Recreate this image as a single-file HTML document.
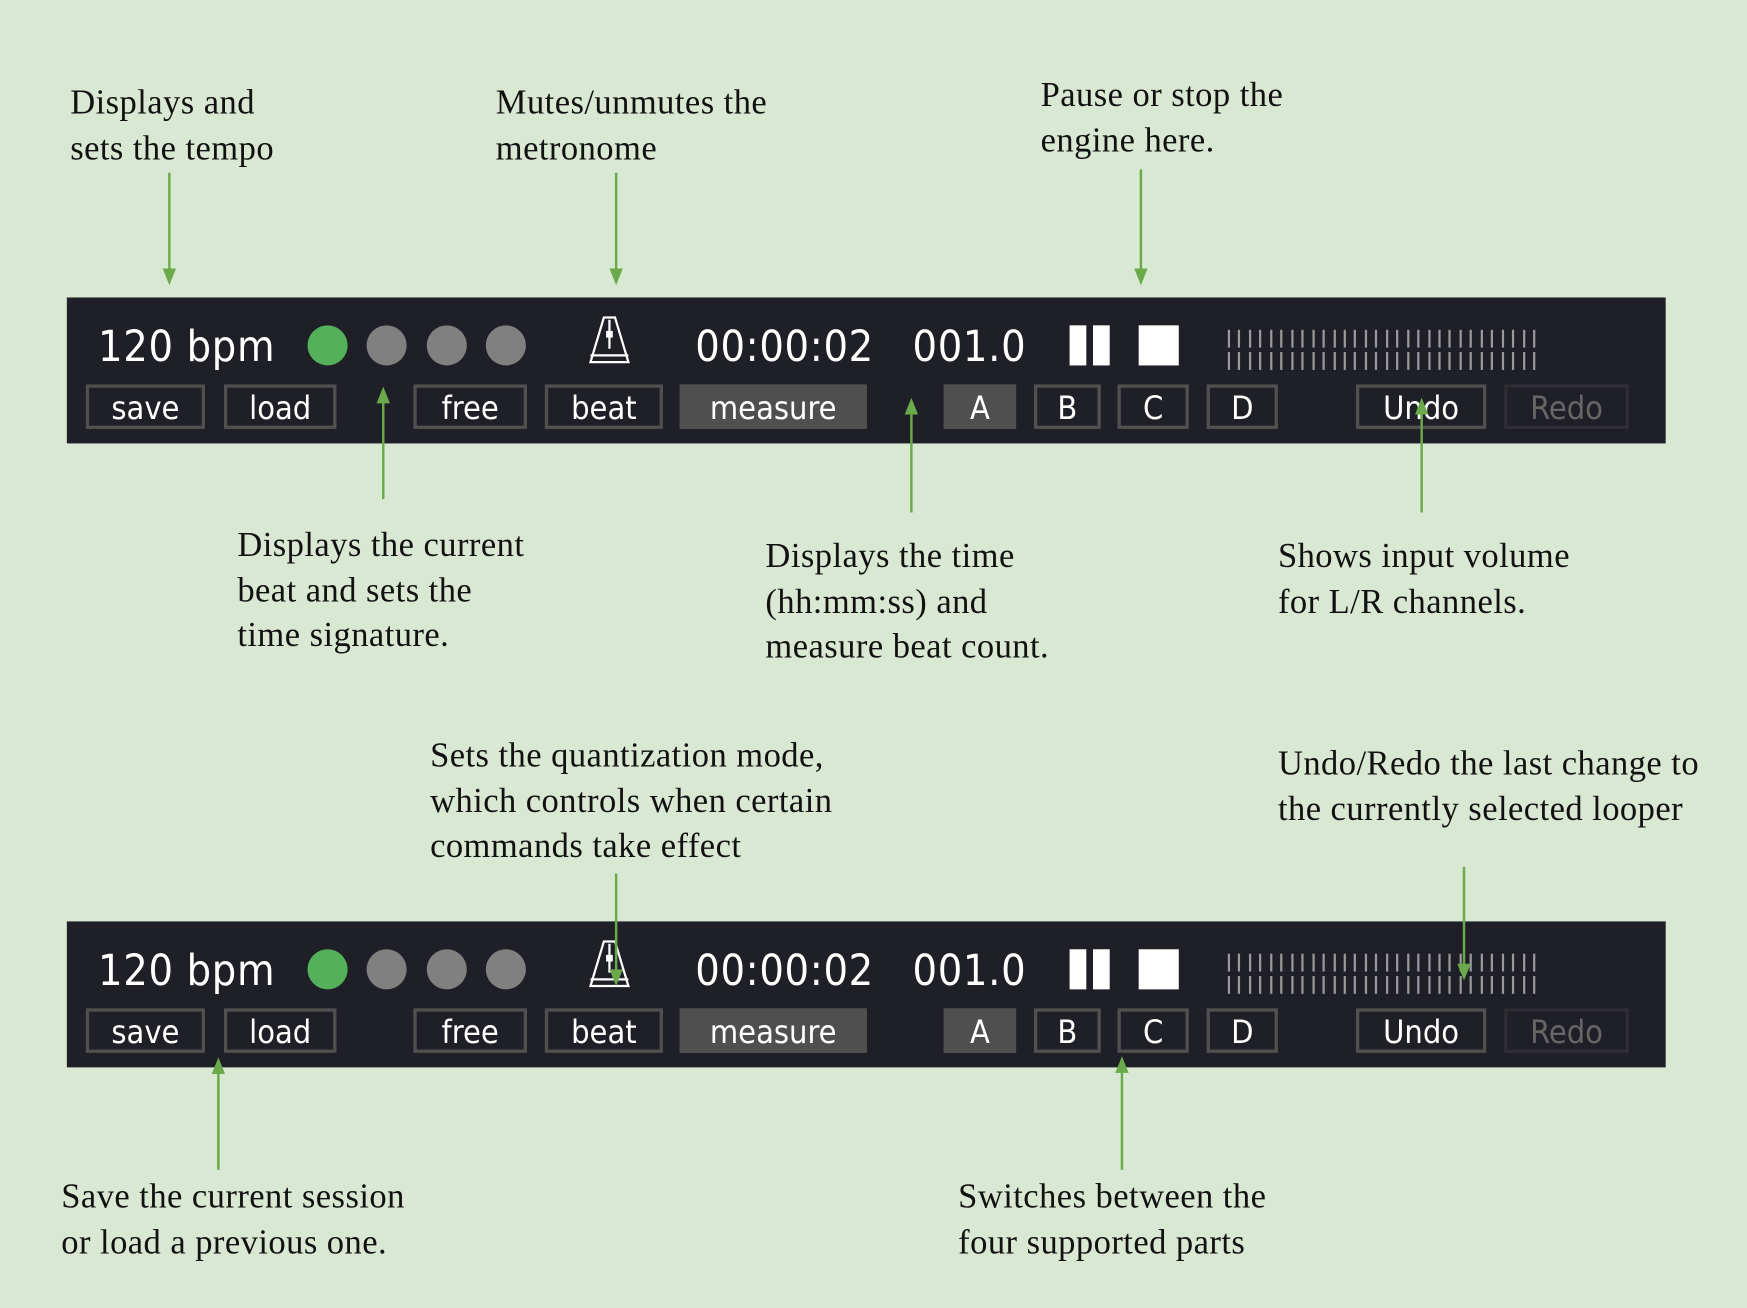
<!DOCTYPE html>
<html><head><meta charset="utf-8"><style>
html,body{margin:0;padding:0;background:#d9e8d3;width:1747px;height:1308px;overflow:hidden}
#w{position:absolute;left:0;top:0;width:1568px;height:1174px;transform:scale(1.11416);transform-origin:0 0;background:#d9e8d3}
.cap{position:absolute;font-family:"Liberation Serif",serif;font-size:31px;line-height:40.5px;color:#111;white-space:nowrap;letter-spacing:0.4px}
.bar{position:absolute;left:60px;width:1435px;height:131px;background:#1e1f27}
.t{position:absolute;font-family:"DejaVu Sans Condensed","DejaVu Sans",sans-serif;color:#fff;white-space:nowrap}
.big{font-size:38.5px;line-height:40px;top:25px;letter-spacing:0.6px}
.dot{position:absolute;top:25px;width:36px;height:36px;border-radius:50%;background:#808080}
.b{position:absolute;top:78px;height:40px;box-sizing:border-box;border:3px solid #505050;color:#fff;font-family:"DejaVu Sans Condensed","DejaVu Sans",sans-serif;font-size:29px;line-height:36px;text-align:center}
.f{background:#4f4f4f;border-color:#4f4f4f}
.d{border-color:#2e2e33;color:#666}
.pb{position:absolute;top:25px;height:36px;background:#fff}
</style></head><body><div id="w">

<div class="cap" style="left:63px;top:72px">Displays and<br>sets the tempo</div>
<div class="cap" style="left:445px;top:72px">Mutes/unmutes the<br>metronome</div>
<div class="cap" style="left:934px;top:65px">Pause or stop the<br>engine here.</div>
<div class="cap" style="left:213px;top:469px">Displays the current<br>beat and sets the<br>time signature.</div>
<div class="cap" style="left:687px;top:479px">Displays the time<br>(hh:mm:ss) and<br>measure beat count.</div>
<div class="cap" style="left:1147px;top:479px">Shows input volume<br>for L/R channels.</div>
<div class="cap" style="left:386px;top:658px">Sets the quantization mode,<br>which controls when certain<br>commands take effect</div>
<div class="cap" style="left:1147px;top:665px">Undo/Redo the last change to<br>the currently selected looper</div>
<div class="cap" style="left:55px;top:1054px">Save the current session<br>or load a previous one.</div>
<div class="cap" style="left:860px;top:1054px">Switches between the<br>four supported parts</div>

<div class="bar" style="top:267px" id="b1"></div>
<div class="bar" style="top:827px" id="b2"></div>

<svg style="position:absolute;left:0;top:0" width="1568" height="1174">
<g stroke="#6aaa4a" stroke-width="2.2" fill="#6aaa4a">
<line x1="152" y1="155" x2="152" y2="245"/><polygon points="146,241 158,241 152,256" stroke="none"/>
<line x1="553" y1="155" x2="553" y2="245"/><polygon points="547,241 559,241 553,256" stroke="none"/>
<line x1="1024" y1="152" x2="1024" y2="245"/><polygon points="1018,241 1030,241 1024,256" stroke="none"/>
<line x1="344" y1="448" x2="344" y2="358"/><polygon points="338,362 350,362 344,347" stroke="none"/>
<line x1="818" y1="460" x2="818" y2="368"/><polygon points="812,372 824,372 818,357" stroke="none"/>
<line x1="1276" y1="460" x2="1276" y2="368"/><polygon points="1270,372 1282,372 1276,357" stroke="none"/>
<line x1="553" y1="784" x2="553" y2="874"/><polygon points="547,870 559,870 553,885" stroke="none"/>
<line x1="1314" y1="778" x2="1314" y2="869"/><polygon points="1308,865 1320,865 1314,880" stroke="none"/>
<line x1="196" y1="1050" x2="196" y2="960"/><polygon points="190,964 202,964 196,949" stroke="none"/>
<line x1="1007" y1="1050" x2="1007" y2="959"/><polygon points="1001,963 1013,963 1007,948" stroke="none"/>
</g></svg>

<script>
var html='<div class="t big" style="left:28px">120 bpm</div>'+
'<div class="dot" style="left:216px;background:#55b05a"></div><div class="dot" style="left:269px"></div><div class="dot" style="left:323px"></div><div class="dot" style="left:376px"></div>'+
'<svg style="position:absolute;left:468px;top:16px" width="40" height="46"><g fill="none" stroke="#fff" stroke-width="2"><polygon points="14,2 24,2 36,42 2,42"/><line x1="2" y1="36" x2="36" y2="36"/><line x1="19" y1="4" x2="19" y2="30"/></g><rect x="16" y="14" width="6" height="6" fill="#fff"/></svg>'+
'<div class="t big" style="left:564px">00:00:02</div><div class="t big" style="left:759px">001.0</div>'+
'<div class="pb" style="left:900px;width:15px"></div><div class="pb" style="left:921px;width:15px"></div><div class="pb" style="left:962px;width:36px"></div>';
var ticks='';for(var i=0;i<30;i++){var x=1042+i*9.45;ticks+='<div style="position:absolute;left:'+x+'px;top:29px;width:2px;height:16px;background:#9a9a9a"></div><div style="position:absolute;left:'+x+'px;top:49px;width:2px;height:16px;background:#9a9a9a"></div>';}
html+=ticks;
var bs=[[17,107,'save',''],[141,101,'load',''],[311,102,'free',''],[429,106,'beat',''],[550,168,'measure','f'],[787,65,'A','f'],[868,60,'B',''],[943,64,'C',''],[1023,64,'D',''],[1157,117,'Undo',''],[1290,112,'Redo','d']];
bs.forEach(function(b){html+='<div class="b '+b[3]+'" style="left:'+b[0]+'px;width:'+b[1]+'px">'+b[2]+'</div>';});
document.getElementById('b1').innerHTML=html;document.getElementById('b2').innerHTML=html;
</script>
</div></body></html>
